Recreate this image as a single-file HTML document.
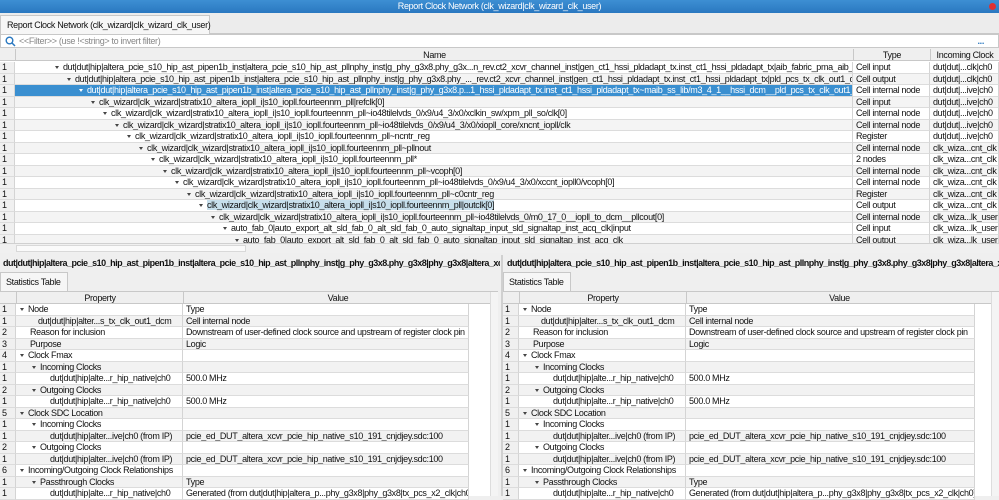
<!DOCTYPE html>
<html><head><meta charset="utf-8"><style>
*{margin:0;padding:0;box-sizing:border-box}
body{width:999px;height:496px;overflow:hidden;background:#efefef;font-family:"Liberation Sans",sans-serif;font-size:9px;letter-spacing:-0.33px;color:#111;position:relative}
.abs{position:absolute}
.title{left:0;top:0;width:999px;height:13px;background:linear-gradient(#3d8fd3,#2a78c0);color:#fff;text-align:center;font-size:9px;line-height:13px}
.tabbar{left:0;top:13px;width:999px;height:21px;background:#ececec;border-bottom:1px solid #c8c8c8}
.tab{left:0;top:15px;height:19px;width:210px;background:#f6f6f6;border:1px solid #c8c8c8;border-bottom:none;line-height:18px;padding-left:6px;white-space:nowrap}
.filter{left:0;top:34px;width:999px;height:14px;background:#fff;border:1px solid #c8c8c8;color:#888;line-height:12px;padding-left:18px}
.row{position:absolute;height:11.5px;line-height:11.5px;white-space:nowrap;overflow:hidden}
.cell{position:absolute;top:0;height:11.5px;overflow:hidden;white-space:nowrap;border-right:1px solid #d4d4d4;border-bottom:1px solid #dcdcdc}
.hdr{position:absolute;height:12px;line-height:12px;background:#efefef;border-bottom:1px solid #c8c8c8;text-align:center}
.tri{display:inline-block;width:0;height:0;border-left:2.5px solid transparent;border-right:2.5px solid transparent;border-top:3px solid #444;vertical-align:middle;margin-right:4px}
.bold{font-weight:bold}
</style></head><body>
<div class="abs title">Report Clock Network (clk_wizard|clk_wizard_clk_user)<span style="position:absolute;right:3px;top:3px;width:7px;height:7px;border-radius:50%;background:#e03030"></span></div>
<div class="abs tabbar"></div>
<div class="abs tab">Report Clock Network (clk_wizard|clk_wizard_clk_user)</div>
<div class="abs filter">&lt;&lt;Filter&gt;&gt; (use !&lt;string&gt; to invert filter)
<svg class="abs" style="left:4px;top:1px" width="11" height="11"><circle cx="4.5" cy="4.5" r="3.3" fill="none" stroke="#2a78c0" stroke-width="1.4"/><line x1="7" y1="7" x2="10" y2="10" stroke="#2a78c0" stroke-width="1.5"/></svg>
<span class="abs" style="right:14px;top:0;color:#2a78c0;font-weight:bold">...</span></div>
<div class="abs" style="left:0;top:49px;width:999px;height:194px;background:#fff" id="top"></div>
<div class="abs" style="left:0;top:243px;width:999px;height:10px;background:#f0f0f0;border-top:1px solid #d0d0d0"><div class="abs" style="left:16px;top:1px;width:230px;height:7px;background:#fafafa;border:1px solid #d8d8d8"></div></div>
<div class="abs bold" style="left:3px;top:257px;width:497px;height:12px;overflow:hidden;white-space:nowrap;line-height:12px;letter-spacing:-0.5px">dut|dut|hip|altera_pcie_s10_hip_ast_pipen1b_inst|altera_pcie_s10_hip_ast_pllnphy_inst|g_phy_g3x8.phy_g3x8|phy_g3x8|altera_xcvr_</div>
<div class="abs bold" style="left:507px;top:257px;width:492px;height:12px;overflow:hidden;white-space:nowrap;line-height:12px;letter-spacing:-0.5px">dut|dut|hip|altera_pcie_s10_hip_ast_pipen1b_inst|altera_pcie_s10_hip_ast_pllnphy_inst|g_phy_g3x8.phy_g3x8|phy_g3x8|altera_xcvr_</div>
<div class="abs" style="left:501px;top:255px;width:2px;height:241px;background:#d0d0d0"></div>
<div id="bl"></div><div id="br"></div>
<script>
const top_=document.getElementById('top');
let h='';
h+='<div class="hdr" style="left:0;top:0;width:15px"></div><div class="hdr" style="left:15px;top:0;width:838px;border-left:1px solid #c8c8c8">Name</div><div class="hdr" style="left:853px;top:0;width:77px;border-left:1px solid #c8c8c8">Type</div><div class="hdr" style="left:930px;top:0;width:69px;border-left:1px solid #c8c8c8">Incoming Clock</div>';
const P='dut|dut|hip|altera_pcie_s10_hip_ast_pipen1b_inst|altera_pcie_s10_hip_ast_pllnphy_inst|';
const C='clk_wizard|clk_wizard|stratix10_altera_iopll_i|s10_iopll.fourteennm_pll';
const rows=[
[57,P+'g_phy_g3x8.phy_g3x...n_rev.ct2_xcvr_channel_inst|gen_ct1_hssi_pldadapt_tx.inst_ct1_hssi_pldadapt_tx|aib_fabric_pma_aib_tx_clk','Cell input','dut|dut|...clk|ch0'],
[69,P+'g_phy_g3x8.phy_..._rev.ct2_xcvr_channel_inst|gen_ct1_hssi_pldadapt_tx.inst_ct1_hssi_pldadapt_tx|pld_pcs_tx_clk_out1_dcm','Cell output','dut|dut|...clk|ch0'],
[81,P+'g_phy_g3x8.p...1_hssi_pldadapt_tx.inst_ct1_hssi_pldadapt_tx~maib_ss_lib/m3_4_1__hssi_dcm__pld_pcs_tx_clk_out1_dcm','Cell internal node','dut|dut|...ive|ch0'],
[93,C+'|refclk[0]','Cell input','dut|dut|...ive|ch0'],
[105,C+'~io48tilelvds_0/x9/u4_3/x0/xclkin_sw/xpm_pll_so/clk[0]','Cell internal node','dut|dut|...ive|ch0'],
[117,C+'~io48tilelvds_0/x9/u4_3/x0/xiopll_core/xncnt_iopll/clk','Cell internal node','dut|dut|...ive|ch0'],
[129,C+'~ncntr_reg','Register','dut|dut|...ive|ch0'],
[141,C+'~pllnout','Cell internal node','clk_wiza...cnt_clk'],
[153,C+'*','2 nodes','clk_wiza...cnt_clk'],
[165,C+'~vcoph[0]','Cell internal node','clk_wiza...cnt_clk'],
[177,C+'~io48tilelvds_0/x9/u4_3/x0/xccnt_iopll0/vcoph[0]','Cell internal node','clk_wiza...cnt_clk'],
[189,C+'~c0cntr_reg','Register','clk_wiza...cnt_clk'],
[201,C+'|outclk[0]','Cell output','clk_wiza...cnt_clk'],
[213,C+'~io48tilelvds_0/m0_17_0__iopll_to_dcm__pllcout[0]','Cell internal node','clk_wiza...lk_user'],
[225,'auto_fab_0|auto_export_alt_sld_fab_0_alt_sld_fab_0_auto_signaltap_input_sld_signaltap_inst_acq_clk|input','Cell input','clk_wiza...lk_user'],
[237,'auto_fab_0|auto_export_alt_sld_fab_0_alt_sld_fab_0_auto_signaltap_input_sld_signaltap_inst_acq_clk','Cell output','clk_wiza...lk_user']];
rows.forEach(function(r,i){var y=13+i*11.5;var bg=i%2?'#f4f4f4':'#fff';
var nb=bg,col='#111',txt=r[1];
var name='<span class="tri" style="'+(i==2?'border-top-color:#fff':'')+'"></span>'+txt;
if(i==12)name='<span class="tri"></span><span style="background:#c7dfec">'+txt+'</span>';
if(i==2){nb='#3a8fd0';col='#fff'}
h+='<div class="row" style="left:0;top:'+y+'px;width:999px;background:'+bg+'"><div class="cell" style="left:0;width:15px;padding-left:2px;background:#f0f0f0">1</div><div class="cell" style="left:15px;width:838px;background:'+nb+';color:'+col+';padding-left:'+(r[0]-17)+'px">'+name+'</div><div class="cell" style="left:853px;width:77px;padding-left:3px">'+r[2]+'</div><div class="cell" style="left:930px;width:69px;padding-left:3px">'+r[3]+'</div></div>';});
top_.innerHTML=h;
function panel(x0){
var vw=x0?289:286;
var s='<div class="abs" style="left:'+x0+'px;top:272px;width:68px;height:19px;background:#f6f6f6;border:1px solid #c8c8c8;border-bottom:none;line-height:18px;padding-left:5px;white-space:nowrap">Statistics Table</div>';
s+='<div class="abs" style="left:'+x0+'px;top:291px;width:'+(x0?496:498)+'px;height:205px;background:#fff;border-top:1px solid #c8c8c8"></div>';
s+='<div class="hdr" style="left:'+x0+'px;top:292px;width:16px"></div><div class="hdr" style="left:'+(x0+16)+'px;top:292px;width:167px;border-left:1px solid #c8c8c8">Property</div>';
s+='<div class="hdr" style="left:'+(x0+183)+'px;top:292px;width:'+(x0?306:309)+'px;border-left:1px solid #c8c8c8">Value</div>';
var d=[['1',1,'Node','Type'],['1',0,'dut|dut|hip|alter...s_tx_clk_out1_dcm','Cell internal node',38],['2',0,'Reason for inclusion','Downstream of user-defined clock source and upstream of register clock pin',30],['3',0,'Purpose','Logic',30],['4',1,'Clock Fmax',''],['1',2,'Incoming Clocks',''],['1',0,'dut|dut|hip|alte...r_hip_native|ch0','500.0 MHz',50],['2',2,'Outgoing Clocks',''],['1',0,'dut|dut|hip|alte...r_hip_native|ch0','500.0 MHz',50],['5',1,'Clock SDC Location',''],['1',2,'Incoming Clocks',''],['1',0,'dut|dut|hip|alter...ive|ch0 (from IP)','pcie_ed_DUT_altera_xcvr_pcie_hip_native_s10_191_cnjdjey.sdc:100',50],['2',2,'Outgoing Clocks',''],['1',0,'dut|dut|hip|alter...ive|ch0 (from IP)','pcie_ed_DUT_altera_xcvr_pcie_hip_native_s10_191_cnjdjey.sdc:100',50],['6',1,'Incoming/Outgoing Clock Relationships',''],['1',2,'Passthrough Clocks','Type'],['1',0,'dut|dut|hip|alte...r_hip_native|ch0','Generated (from dut|dut|hip|altera_p...phy_g3x8|phy_g3x8|tx_pcs_x2_clk|ch0)',50]];
d.forEach(function(r,i){var y=304+i*11.5;var bg=i%2?'#f2f2f2':'#fff';
var pl=r[1]==1?4:r[1]==2?16:r[4]-16;
var p=(r[1]?'<span class="tri"></span>':'')+r[2];
s+='<div class="row" style="left:'+x0+'px;top:'+y+'px;width:'+(183+vw)+'px;background:'+bg+'"><div class="cell" style="left:0;width:16px;padding-left:2px;background:#f0f0f0">'+r[0]+'</div><div class="cell" style="left:16px;width:167px;padding-left:'+pl+'px">'+p+'</div><div class="cell" style="left:183px;width:'+vw+'px;padding-left:3px">'+r[3]+'</div></div>';});
s+='<div class="abs" style="left:'+(x0+(x0?488:490))+'px;top:292px;width:8px;height:204px;background:#f4f4f4;border-left:1px solid #ddd"></div>';
return s;}
document.getElementById('bl').innerHTML=panel(0);
document.getElementById('br').innerHTML=panel(503);
</script>
</body></html>
